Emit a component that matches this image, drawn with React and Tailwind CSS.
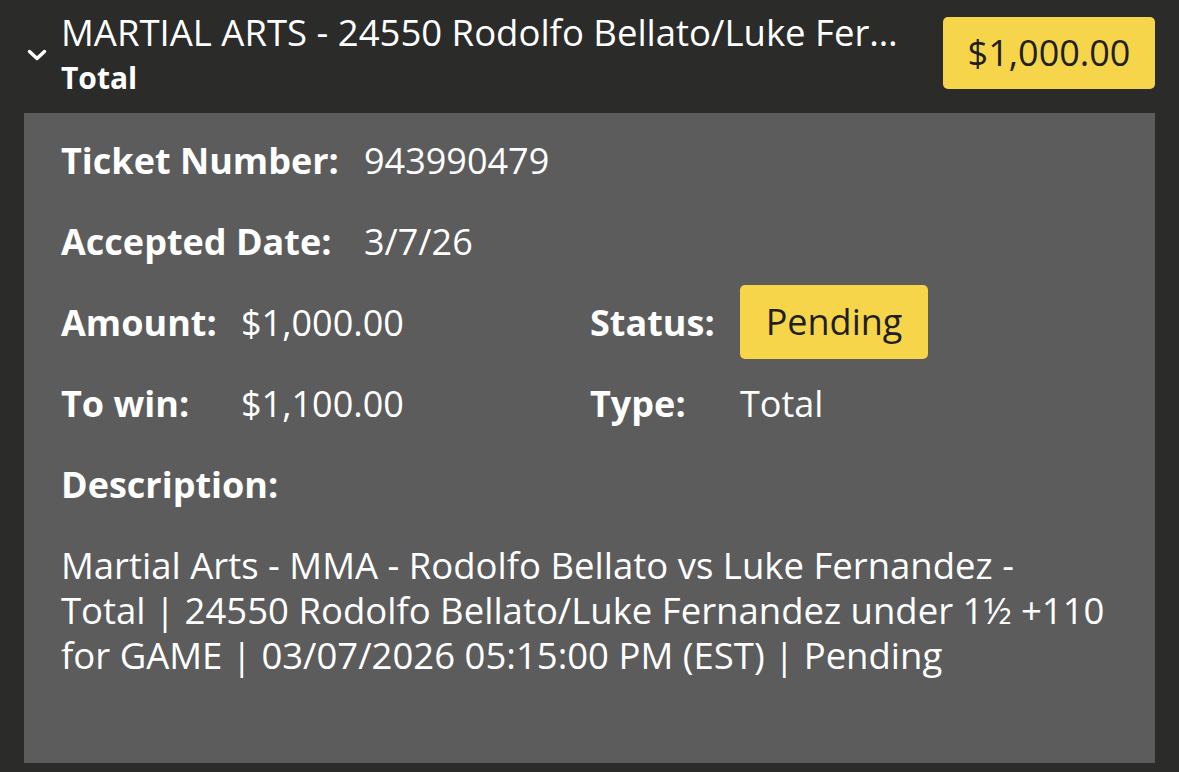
import React from 'react';

const font = { fontFamily: '"Open Sans", "Noto Sans", sans-serif' };

function Chevron() {
  return (
    <svg width="20" height="12" viewBox="0 0 20 12" className="shrink-0">
      <path d="M2.5 2.5 L10 9.5 L17.5 2.5" fill="none" stroke="white" strokeWidth="3.5" strokeLinecap="round" strokeLinejoin="round" />
    </svg>
  );
}

function Badge({ children, className = '' }) {
  return (
    <span className={`inline-flex items-center justify-center rounded-[5px] bg-[#f6d54b] text-[#1f1f1f] ${className}`}>
      {children}
    </span>
  );
}

export default function App() {
  return (
    <div className="min-h-[772px] w-full bg-[#2b2b2a] text-white" style={font}>
      {/* header */}
      <div className="flex items-start pt-[10px] pr-[24px] pl-[27px]">
        <div className="pt-[39px] w-[34px]">
          <Chevron />
        </div>
        <div className="min-w-0 flex-1 pr-[33px]">
          <div className="truncate text-[36.5px] leading-[44px]">
            MARTIAL ARTS - 24550 Rodolfo Bellato/Luke Fernandez
          </div>
          <div className="mt-[6px] text-[30px] font-bold leading-[36px]">Total</div>
        </div>
        <Badge className="mt-[7px] h-[72px] w-[212px] text-[36px]">$1,000.00</Badge>
      </div>

      {/* detail panel */}
      <div className="mx-[24px] mt-[17px] h-[650px] bg-[#5c5c5c] px-[37px] pt-[7px] text-[36px]">
        <div className="flex h-[81px] items-center">
          <span className="w-[303px] font-bold">Ticket Number:</span>
          <span>943990479</span>
        </div>
        <div className="flex h-[81px] items-center">
          <span className="w-[303px] font-bold">Accepted Date:</span>
          <span>3/7/26</span>
        </div>
        <div className="flex h-[81px] items-center">
          <span className="w-[180px] font-bold">Amount:</span>
          <span className="w-[349px]">$1,000.00</span>
          <span className="w-[150px] font-bold">Status:</span>
          <Badge className="h-[74px] w-[188px] -translate-y-[1px]">Pending</Badge>
        </div>
        <div className="flex h-[81px] items-center">
          <span className="w-[180px] font-bold">To win:</span>
          <span className="w-[349px]">$1,100.00</span>
          <span className="w-[150px] font-bold">Type:</span>
          <span>Total</span>
        </div>
        <div className="flex h-[81px] items-center">
          <span className="font-bold">Description:</span>
        </div>
        <p className="mt-[18px] text-[36.5px] leading-[45px]">
          Martial Arts - MMA - Rodolfo Bellato vs Luke Fernandez -<br />
          Total | 24550 Rodolfo Bellato/Luke Fernandez under 1½ +110<br />
          for GAME | 03/07/2026 05:15:00 PM (EST) | Pending
        </p>
      </div>
    </div>
  );
}
